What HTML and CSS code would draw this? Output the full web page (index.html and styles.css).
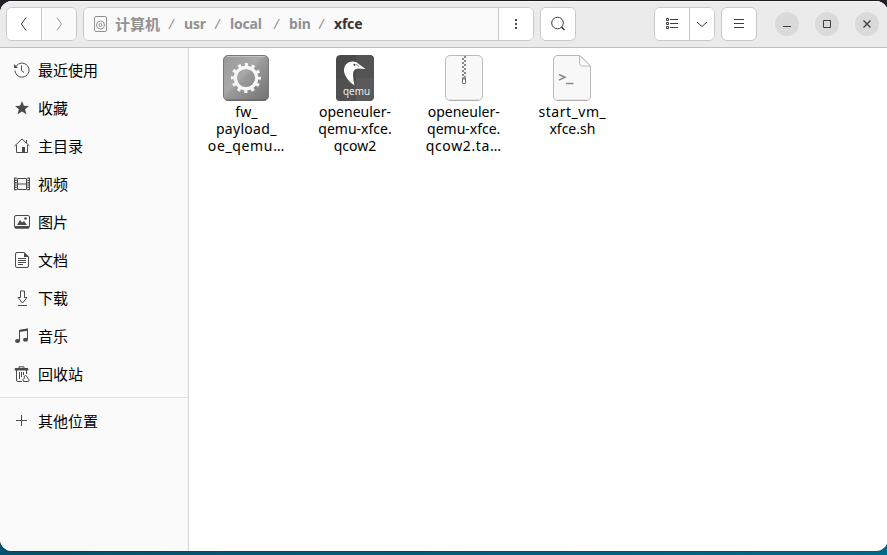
FILE: index.html
```
<!DOCTYPE html>
<html lang="zh-CN">
<head>
<meta charset="utf-8">
<title>xfce</title>
<link rel="stylesheet" href="styles.css">
</head>
<body>
<div class="window">
  <header class="bar">
    <div class="group nav">
      <button><svg width="16" height="16" viewBox="0 0 16 16"><path d="M10 1.500 5.500 8 10 14.500"/></svg></button>
      <button class="off"><svg width="16" height="16" viewBox="0 0 16 16"><path d="M6 1.500 10.500 8 6 14.500"/></svg></button>
    </div>
    <div class="group path">
      <div class="crumbs">
        <svg class="disk" width="14" height="16" viewBox="0 0 14 16"><rect x=".5" y=".5" width="12" height="15" rx="1.500"/><circle cx="6.500" cy="9" r="4"/><circle cx="6.500" cy="9" r="1.500"/></svg>
        <b class="c-root">计算机</b><i>/</i><b class="c-usr">usr</b><i>/</i><b class="c-local">local</b><i>/</i><b class="c-bin">bin</b><i>/</i><b class="c-here">xfce</b>
      </div>
      <button><svg width="16" height="16" viewBox="0 0 16 16"><path class="solid" d="M7 3h2v2H7zM7 7h2v2H7zM7 11h2v2H7z"/></svg></button>
    </div>
    <div class="group search"><button><svg width="16" height="16" viewBox="0 0 16 16"><circle cx="7.500" cy="7" r="5.800"/><path d="m11.500 11 3 3" stroke-width="1.600"/></svg></button></div>
    <div class="group view">
      <button><svg width="16" height="16" viewBox="0 0 16 16"><path d="M2.500 2.500h2v2h-2zM2.500 6.500h2v2h-2zM2.500 10.500h2v2h-2zM6 3.500h8M6 7.500h8M6 11.500h8"/></svg></button>
      <button><svg width="12" height="16" viewBox="0 0 12 16"><path d="m1 6 5 4.500L11 6"/></svg></button>
    </div>
    <div class="group menu"><button><svg width="16" height="16" viewBox="0 0 16 16"><path d="M3 3.500h10M3 7.500h10M3 11.500h10"/></svg></button></div>
    <div class="controls">
      <span><svg width="16" height="16" viewBox="0 0 16 16"><path d="M4 10.500h8"/></svg></span>
      <span><svg width="16" height="16" viewBox="0 0 16 16"><path d="M4.500 4.500h7v7h-7z"/></svg></span>
      <span><svg width="16" height="16" viewBox="0 0 16 16"><path d="m4.500 4.500 7 7m0-7-7 7" stroke-width="1.300"/></svg></span>
    </div>
  </header>
  <div class="body">
    <nav class="side">
      <a><svg width="16" height="16" viewBox="0 0 16 16"><path d="M2 4.500A7 7 0 1 1 1 8.500M7.500 3.500v5l2.500 2"/><path class="solid" d="M0 2v4h4z"/></svg>最近使用</a>
      <a><svg width="16" height="16" viewBox="0 0 16 16"><path class="solid" d="m8 1 1.900 4.700 5.100.3-3.900 3.200 1.300 5L8 11.400l-4.400 2.800 1.300-5L1 6l5.100-.3z"/></svg>收藏</a>
      <a><svg width="16" height="16" viewBox="0 0 16 16"><path d="M.5 8 8 1l7.500 7M2.500 7v7.500h11V7M12.500 2v3"/><path class="solid" d="M8 9h3v6H8z"/></svg>主目录</a>
      <a><svg width="16" height="16" viewBox="0 0 16 16"><path d="M1.500 1.500v13M14.500 1.500v13" stroke-width="2.500" stroke-dasharray="1.300 1"/><path d="M.5 2v12M15.500 2v12M3.500 2.500v11h9v-11zM3.500 8h9"/></svg>视频</a>
      <a><svg width="16" height="16" viewBox="0 0 16 16"><rect x=".5" y="1.500" width="15" height="12.500" rx="1.500"/><path class="solid" d="M1 12h14v2.500H1zM3 11l3-5 2 2.500L10 7l3 4z"/><circle class="solid" cx="11.500" cy="4.500" r="1.300"/></svg>图片</a>
      <a><svg width="16" height="16" viewBox="0 0 16 16"><path d="M3 .5h7L14.500 5v9q0 1.500-1.500 1.500H3q-1.500 0-1.500-1.500V2Q1.500.5 3 .5zM4 6.500h8M4 8.500h8M4 10.500h8M4 12.500h5"/><path class="solid" d="M10 0v5h5z"/></svg>文档</a>
      <a><svg width="16" height="16" viewBox="0 0 16 16"><path d="M6.500 1v6.500H4L8.500 13 13 7.500h-2.500V1zM4 15.500h9"/></svg>下载</a>
      <a><svg width="16" height="16" viewBox="0 0 16 16"><path d="M5.500 13V2.500l8-1.500v10.500"/><path class="solid" d="M5 2l9-1.500v2.300L5 4z"/><ellipse class="solid" cx="3.500" cy="13" rx="2.500" ry="2"/><ellipse class="solid" cx="11.500" cy="11.800" rx="2.500" ry="2"/></svg>音乐</a>
      <a><svg width="16" height="16" viewBox="0 0 16 16"><path d="M5 2V.8h5V2M2.500 4v10q0 1.500 1.500 1.500h4M12.500 4v4M5.500 6v7M7.500 6v5M9.500 6v3"/><path class="solid" d="M1 2h13l.5 2.500H.5z"/><path d="M9.500 15.500q-1.500-2 1-3.500L10 10.500q1.500-2 3 0l.5 1.500q3 2 1 3.500z"/></svg>回收站</a>
      <hr>
      <a class="other"><svg width="16" height="16" viewBox="0 0 16 16"><path d="M2 7.500h11M7.500 2v11"/></svg>其他位置</a>
    </nav>
    <main class="files">
      <figure>
        <svg width="46" height="46" viewBox="0 0 46 46">
          <defs><linearGradient id="g" x2="1" y2="1"><stop stop-color="#999"/><stop offset=".42" stop-color="#a9a9a9"/><stop offset=".5" stop-color="#999"/><stop offset="1" stop-color="#717171"/></linearGradient></defs>
          <rect x=".5" y=".5" width="45" height="45" rx="4.500" fill="url(#g)" stroke="#777"/><path d="M4 1.500h38" stroke="#c2c2c2"/><path d="M3 45h40" stroke="#636363"/>
          <circle cx="23" cy="23" r="10.700" fill="none" stroke="#f7f7f5" stroke-width="3.200"/>
          <circle cx="23" cy="23" r="13.400" fill="none" stroke="#f7f7f5" stroke-width="3.200" stroke-dasharray="3.200 3.816" stroke-dashoffset="1.600"/>
        </svg>
        <figcaption><span class="f1">fw_</span><span class="f2">payload_</span><span class="f3">oe_qemu…</span></figcaption>
      </figure>
      <figure>
        <svg width="38" height="46" viewBox="0 0 38 46">
          <rect width="38" height="46" rx="4.500" fill="#4b4b4b"/><path d="M20 0h13.500Q38 0 38 4.500V23H20z" fill="#535353"/><path d="M0 23h38v18.500q0 4.500-4.500 4.500h-29Q0 46 0 41.500z" fill="#5a5a5a"/><path d="M0 23h20v23H4.500Q0 46 0 41.500z" fill="#505050"/>
          <path d="M18.500 30.500C12 26 8 20 8 15.500 8 9.500 12 6.500 17 6.500q4 0 6 2.700L29.500 14l-7.500-.5q-5 .500-5 6 0 5 1.500 11z" fill="#fff"/><circle cx="18.500" cy="9.800" r="1.100" fill="#444"/><path d="M20 9.500q2 0 3 2.500" fill="none" stroke="#555" stroke-width=".6"/>
          <text x="7" y="40" textLength="27" lengthAdjust="spacingAndGlyphs">qemu</text>
        </svg>
        <figcaption><span class="f4">openeuler-</span><span class="f5">qemu-xfce.</span><span class="f6">qcow2</span></figcaption>
      </figure>
      <figure>
        <svg width="38" height="46" viewBox="0 0 38 46">
          <rect x=".5" y=".5" width="37" height="45" rx="4.500" fill="#f8f8f8" stroke="#b9b9b9"/><path d="M4 45.300h30" stroke="#aaa"/>
          <path d="M18 3v19" stroke="#888" stroke-width="2" stroke-dasharray="2 2"/><path d="M20 1v21" stroke="#888" stroke-width="2" stroke-dasharray="2 2"/>
          <path d="M17.500 23h3v5.500h-3z" fill="#fff" stroke="#777"/><path d="M17 23.500h4" stroke="#777" stroke-width="2"/>
        </svg>
        <figcaption><span class="f4">openeuler-</span><span class="f5">qemu-xfce.</span><span class="f7">qcow2.ta…</span></figcaption>
      </figure>
      <figure>
        <svg width="38" height="46" viewBox="0 0 38 46">
          <path d="M5 .5h22L37.500 11v30q0 4.500-4.500 4.500H5Q.5 45.500.5 41V5Q.5.500 5 .500z" fill="#f8f8f8" stroke="#b9b9b9"/><path d="M4 45.300h30" stroke="#aaa"/><path d="M26.500.5V8q0 3 3 3h8z" fill="#fff" stroke="#b9b9b9"/>
          <path d="m6 19.500 6 2.800-6 2.800" fill="none" stroke="#888" stroke-width="1.500"/><path d="M13 28.500h7.500" stroke="#888" stroke-width="1.300"/>
        </svg>
        <figcaption><span class="f8">start_vm_</span><span class="f9">xfce.sh</span></figcaption>
      </figure>
    </main>
  </div>
</div>
</body>
</html>
```
FILE: styles.css
```
* { box-sizing: border-box; }
body {
  margin: 0;
  height: 555px;
  overflow: hidden;
  padding-top: 1px;
  background: linear-gradient(#241f26 0 40px, transparent 40px), linear-gradient(90deg, #00526f, #006a8a);
  font-family: "Noto Sans", "Noto Sans CJK SC", sans-serif;
  font-size: 15px;
  color: #000;
}
.window {
  width: 888px;
  height: 550px;
  border-radius: 12px;
  overflow: hidden;
  background: #fff;
  box-shadow: 0 0 2px #0008;
}
.bar {
  height: 47px;
  display: flex;
  align-items: center;
  padding: 0 0 1px 6px;
  background: #ebebeb;
  border-bottom: 1px solid #bfbfbf;
  border-top: 1px solid #f7f7f7;
}
svg { display: block; flex: none; }
.bar svg, .side svg { fill: none; stroke: #3d3d3d; }
svg .solid { fill: #4a4a4a; stroke: none; }
.group {
  display: flex;
  height: 34px;
  border: 1px solid #c9c9c9;
  border-radius: 6px;
  background: #fff;
  overflow: hidden;
}
button {
  flex: 1;
  padding: 0;
  border: 0;
  background: #fff;
  display: flex;
  align-items: center;
  justify-content: center;
}
button + button, .crumbs + button { border-left: 1px solid #c9c9c9; }
button.off { background: #fafafa; }
.bar .off svg { stroke: #999; }
.nav { width: 71px; margin-right: 6px; }
.path { width: 451px; margin-right: 6px; }
.path button { flex: 0 0 35px; }
.search { width: 36px; margin-right: 78px; }
.view { width: 61px; margin-right: 6px; }
.view button + button { flex: 0 0 25px; }
.menu { width: 36px; margin-right: 18px; }
.crumbs {
  flex: 1;
  display: flex;
  align-items: center;
  padding-left: 10px;
  background: #fafafa;
  color: #919191;
  font-size: 14px;
  line-height: 20px;
}
.crumbs .disk { stroke: #919191; margin-right: 7px; }
.crumbs b { font-weight: 700; white-space: nowrap; letter-spacing: -0.200px; }
.crumbs i { width: 25px; text-align: center; font-style: normal; transform: skewX(-8deg); }
.crumbs .c-root { width: 44px; font-size: 15px; letter-spacing: 0; }
.c-usr { width: 21px; }
.c-local { width: 34px; }
.c-bin { width: 20px; }
.c-here { width: 30px; color: #333; }
.controls { display: flex; gap: 16px; }
.controls span {
  width: 24px;
  height: 24px;
  border-radius: 50%;
  background: #dadada;
  display: flex;
  align-items: center;
  justify-content: center;
}
.body { display: flex; height: 503px; }
.side {
  width: 189px;
  padding-top: 3px;
  background: #fafafa;
  border-right: 1px solid #d5d5d5;
}
.side a {
  display: flex;
  align-items: center;
  height: 38px;
  padding-left: 14px;
  gap: 8px;
  line-height: 22px;
}
.side svg { stroke: #4a4a4a; }
.side hr { margin: 4px 0; border: 0; border-top: 1px solid #dedede; }
.files { display: flex; padding: 7px 0 0 3px; align-items: flex-start; }
figure {
  margin: 0;
  width: 108.700px;
  display: flex;
  flex-direction: column;
  align-items: center;
}
figure text { font: 10px "Noto Sans", sans-serif; fill: #eee; }
figcaption {
  padding-top: 2px;
  font-size: 14px;
  line-height: 17px;
  text-align: center;
}
figcaption span { display: block; white-space: nowrap; }
.f2 { letter-spacing: 0.300px; }
.f3 { letter-spacing: 0.650px; }
.f7 { letter-spacing: 0.650px; }
.f8 { letter-spacing: 0.500px; }
```
